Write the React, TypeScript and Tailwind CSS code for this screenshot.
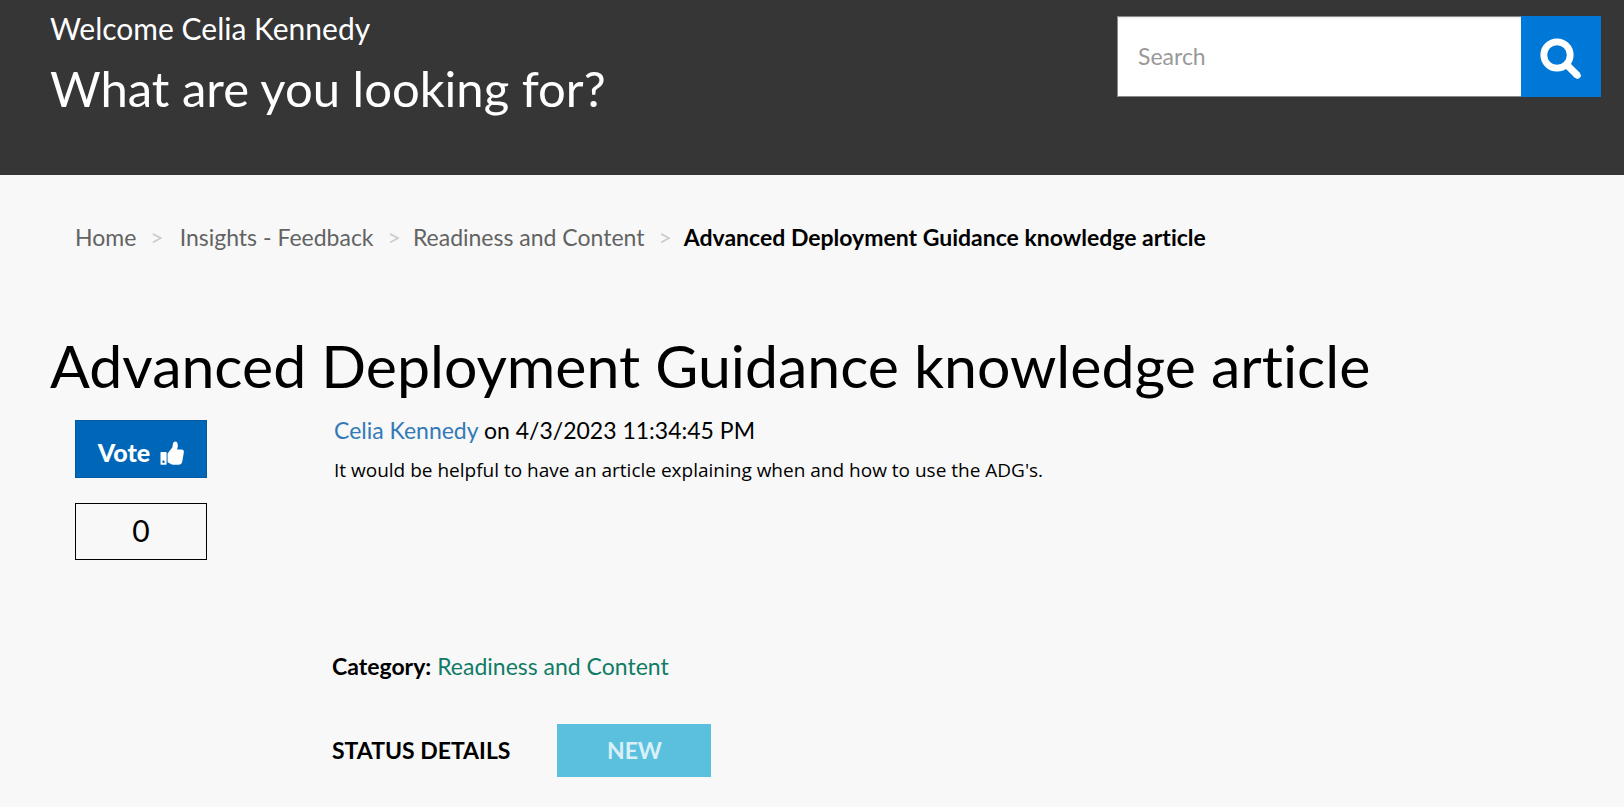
import React from 'react';

const breadcrumbs = ['Home', 'Insights - Feedback', 'Readiness and Content'];

function SearchIcon() {
  return (
    <svg viewBox="0 0 42 42" className="size-[42px]" fill="none" stroke="currentColor" aria-hidden="true">
      <circle cx="17" cy="17" r="13.200" strokeWidth="6.800" />
      <path d="M27 27 37.500 37.500" strokeWidth="7" />
      <path d="M36.500 36.500 37.500 37.500" strokeWidth="6.500" strokeLinecap="round" />
    </svg>
  );
}

function ThumbsUpIcon() {
  return (
    <svg viewBox="0 0 24 24" className="size-6" fill="currentColor" aria-hidden="true">
      <path fillRule="evenodd" d="M.5 11.5Q.5 11 1 11H6Q6.600 11 6.600 11.600V23Q6.600 23.700 6 23.700H1Q.5 23.700 .5 23ZM3.500 19.500A1.200 1.200 0 1 0 3.500 21.900 1.200 1.200 0 1 0 3.500 19.500Z" />
      <path d="M7.600 12.500 12.300 6.500 13 2.500Q13.400 .6 15.300 .6 17.800 .8 17.800 4.500 17.800 6.600 17 8.500H22Q24 8.800 23.900 11L22.300 20.500Q21.600 23.700 18.500 23.700H13Q11 23.600 9.500 22.300L7.600 21.300Z" />
    </svg>
  );
}

export default function App() {
  return (
    <div className="min-h-screen bg-[#f8f8f8] font-['Lato',sans-serif] text-[23px] text-black [font-variant-ligatures:none]">
      <header className="flex items-start justify-between bg-[#363636] pt-4 pr-[23px] pb-[57px] pl-[50px] text-white">
        <div>
          <p className="text-[30px] leading-6">Welcome Celia Kennedy</p>
          <h1 className="pt-[18px] text-[49px] leading-[60px]">What are you looking for?</h1>
        </div>
        <form role="search" className="flex h-[81px] w-[484px]">
          <input
            type="search"
            aria-label="Search"
            placeholder="Search"
            className="min-w-0 flex-1 border border-r-0 border-[#8a8a8a] bg-white px-5 text-black shadow-[inset_0_1px_1px_rgba(0,0,0,0.075)] placeholder:text-[#999999]"
          />
          <button type="button" aria-label="Search" className="flex w-20 items-center justify-center bg-[#0078d7] pt-1">
            <SearchIcon />
          </button>
        </form>
      </header>

      <nav aria-label="Breadcrumb" className="px-[75px] pt-12">
        <ol className="flex leading-7">
          {breadcrumbs.map((crumb) => (
            <li key={crumb} className="flex text-[#636363] first:mr-1">
              <a href="#">{crumb}</a>
              <span className="pr-3 pl-3.5 text-[#cccccc]">&gt;</span>
            </li>
          ))}
          <li className="font-bold" aria-current="page">Advanced Deployment Guidance knowledge article</li>
        </ol>
      </nav>

      <main className="px-[50px]">
        <h2 className="pt-[79px] text-[59px] leading-[72px]">Advanced Deployment Guidance knowledge article</h2>

        <div className="flex gap-[125px] pt-[18px] pl-[25px]">
          <aside className="flex w-[132px] shrink-0 flex-col gap-[25px]">
            <button type="button" className="flex h-[58px] items-center justify-center gap-2.5 border border-[#005a9e] bg-[#0067b8] pt-2 text-[25px] font-black text-white">
              Vote
              <ThumbsUpIcon />
            </button>
            <div className="flex h-[57px] items-center justify-center border border-black pb-0.5 text-[30px]">0</div>
          </aside>

          <article>
            <div className="px-0.5">
              <p className="leading-5">
                <a href="#" className="text-[#337ab7]">Celia Kennedy</a> on 4/3/2023 11:34:45 PM
              </p>
              <p className="pt-4 font-['Open_Sans',sans-serif] text-[19px] leading-7">
                It would be helpful to have an article explaining when and how to use the ADG's.
              </p>
            </div>
            <p className="pt-[168px] leading-7">
              <strong>Category:</strong> <a href="#" className="text-[#107c66]">Readiness and Content</a>
            </p>
            <div className="flex items-center gap-[47px] pt-11">
              <h3 className="font-bold">STATUS DETAILS</h3>
              <span className="flex h-[53px] w-[154px] items-center justify-center bg-[#5bc0de] font-bold text-[#d9f0f8]">NEW</span>
            </div>
          </article>
        </div>
      </main>
    </div>
  );
}
